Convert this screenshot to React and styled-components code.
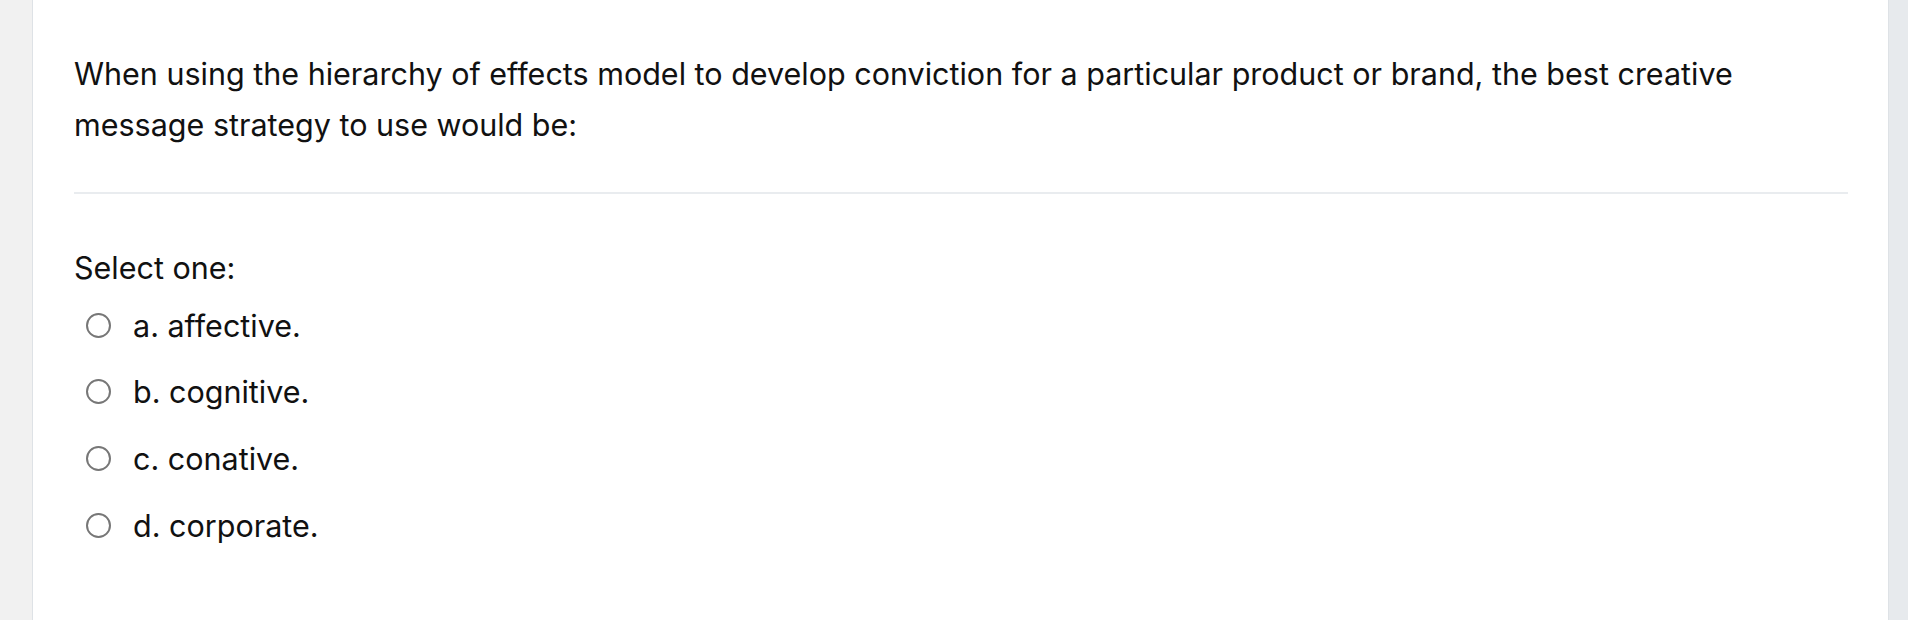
import styled, { createGlobalStyle } from "styled-components";

const options = [
  { id: "a", label: "a. affective." },
  { id: "b", label: "b. cognitive." },
  { id: "c", label: "c. conative." },
  { id: "d", label: "d. corporate." },
];

function App() {
  return (
    <>
      <GlobalStyle />
      <Page>
        <Gutter />
        <Card>
          <Question>
            When using the hierarchy of effects model to develop conviction for a particular
            product or brand, the best creative message strategy to use would be:
          </Question>
          <Divider />
          <Prompt>Select one:</Prompt>
          <Answers>
            {options.map((opt) => (
              <Answer key={opt.id}>
                <Radio />
                <AnswerText>{opt.label}</AnswerText>
              </Answer>
            ))}
          </Answers>
        </Card>
        <Drawer />
      </Page>
    </>
  );
}

export default App;

const GlobalStyle = createGlobalStyle`
  html, body {
    margin: 0;
    padding: 0;
    height: 100%;
    overflow: hidden;
  }
  body {
    font-family: Inter, "Noto Sans", sans-serif;
    color: #111;
  }
`;

const Page = styled.div`
  display: flex;
  height: 620px;
`;

const Gutter = styled.div`
  width: 32px;
  flex-shrink: 0;
  background-color: #f1f1f1;
  border-right: 1px solid #dee2e6;
`;

const Card = styled.div`
  flex: 1;
  background-color: white;
  padding: 48px 40px 0 41px;
`;

const Drawer = styled.div`
  width: 19px;
  flex-shrink: 0;
  background-color: #e7eaed;
  border-left: 1px solid #dee2e6;
`;

const Question = styled.div`
  font-size: 30.5px;
  line-height: 51px;
`;

const Divider = styled.hr`
  margin: 42px 0 48px;
  border: none;
  height: 2px;
  background-color: #e9ecef;
`;

const Prompt = styled.div`
  font-size: 30.5px;
  line-height: 51px;
`;

const Answers = styled.div`
  display: flex;
  flex-direction: column;
  margin-top: -1px;
`;

const Answer = styled.label`
  display: flex;
  align-items: center;
  height: 66.6px;
  padding-left: 12px;
  cursor: pointer;
`;

const Radio = styled.span`
  width: 25px;
  height: 25px;
  box-sizing: border-box;
  border: 2px solid #777;
  border-radius: 50%;
  flex-shrink: 0;
`;

const AnswerText = styled.span`
  margin-left: 22px;
  font-size: 30.5px;
  line-height: 51px;
`;
